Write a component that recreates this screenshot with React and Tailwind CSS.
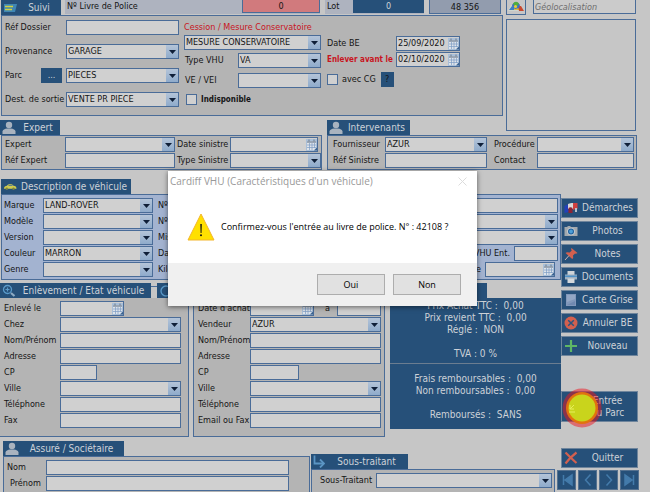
import React from "react";
import clsx from "clsx";

const BORDER = "border-[#4a6c98]";

/* ---------- icons ---------- */

function PersonIcon() {
  return (
    <svg viewBox="0 0 14 14" className="h-[14px] w-[14px] shrink-0" fill="#a9b3bf">
      <circle cx="7" cy="4" r="3.2" />
      <path d="M0.5 13V10.5C0.5 8.5 3 7.6 5 7.4h4c2 .2 4.500 1.100 4.500 3.100V13z" />
    </svg>
  );
}

function NoteIcon() {
  return (
    <svg viewBox="0 0 14 12" className="h-3 w-[14px] shrink-0">
      <path d="M1 2h13l-2 8H1z" fill="#3f86b4" />
      <path d="M2 4.500h8M2 7.500h7" stroke="#d3d23f" strokeWidth="1.300" />
    </svg>
  );
}

function CarIcon() {
  return (
    <svg viewBox="0 0 14 8" className="h-2 w-[14px] shrink-0">
      <path d="M1 5.500C1 3.500 2.500 3 4 2.800 5 1 9 .8 10.500 2.800c2 .3 3 1 3 2.900H1z" fill="#cfcb4e" />
      <path d="M5 3l1-1h3l1 1z" fill="#5f7f8c" />
      <circle cx="3.800" cy="5.800" r="1.200" fill="#7d8440" />
      <circle cx="10.500" cy="5.800" r="1.200" fill="#7d8440" />
    </svg>
  );
}

function SearchIcon() {
  return (
    <svg viewBox="0 0 14 14" className="h-[14px] w-[14px] shrink-0" fill="none" stroke="#5b9bcb">
      <circle cx="5.500" cy="5.500" r="4" strokeWidth="1.300" />
      <path d="M5.500 3.500v4M3.500 5.500h4" strokeWidth="1.200" />
      <path d="M9 9l3.500 3" strokeWidth="2.200" stroke="#8eabc4" />
    </svg>
  );
}

function CircleIcon() {
  return (
    <svg viewBox="0 0 14 14" className="h-[14px] w-[14px] shrink-0" fill="none" stroke="#5b9bcb">
      <circle cx="7" cy="7" r="5" strokeWidth="1.300" />
    </svg>
  );
}

function TurnIcon() {
  return (
    <svg viewBox="0 0 12 13" className="h-[13px] w-3 shrink-0" fill="none" stroke="#5b95c4" strokeWidth="1.800">
      <path d="M1.500 0.500V8.500H10" />
      <path d="M7 4.500l4 4-4 4" />
    </svg>
  );
}

function MapIcon() {
  return (
    <svg viewBox="0 0 16 12" className="h-3 w-4">
      <path d="M0 11l3-6 3 1 4-1 3 1 3 5z" fill="#cfd6cf" />
      <path d="M1 10l3-4 3 1-1 3z" fill="#3b7fc4" />
      <path d="M6 10l1-4 3-1 2 5z" fill="#dcb93a" />
      <path d="M10 6l3 0 3 5h-5z" fill="#c8482f" />
      <path d="M4 6c0-4 6-5 8-1l-1 3-4 1z" fill="#3b6fc4" />
      <path d="M5 4c1-3 5-3 6 0l-3 3z" fill="#4fae3f" />
      <circle cx="7.500" cy="6.500" r="1.600" fill="#e3cf3a" />
    </svg>
  );
}

function CalendarIcon() {
  return (
    <svg viewBox="0 0 11 12" className="h-3 w-[11px] shrink-0">
      <path d="M0 0h11v12H0z" fill="#a9bfd8" />
      <path d="M1 3h9v6l-2 2H1z" fill="#dfe4ea" />
      <path d="M1 2h9v2H1z" fill="#9aa6b5" />
      <path d="M3 0.500v2M8 0.500v2" stroke="#6d7a8a" />
      <path d="M3.500 4v7M6 4v7M8.500 4v5M1 6h9M1 8.500h9" stroke="#7d9cc4" strokeWidth="0.700" />
      <path d="M8 11.500l3-3v3z" fill="#3a628f" />
    </svg>
  );
}

function FlagIcon() {
  return (
    <svg viewBox="0 0 14 12" className="h-3 w-[14px]">
      <path d="M0.500 4l4-2v8l-4 1z" fill="#2440b8" />
      <path d="M4 2c2-1 3-1 5-1v6H4z" fill="#d8d8d8" />
      <path d="M9 1c2 0 3 0 4.500 0v6c-2 0-3 0-4.500 1z" fill="#d04040" />
      <path d="M4.500 6c1-1 3-1 4 0v5h-4z" fill="#8d2434" />
      <path d="M11 6h2v4h-2z" fill="#b9c0cc" />
    </svg>
  );
}

function CameraIcon() {
  return (
    <svg viewBox="0 0 14 12" className="h-3 w-[14px]">
      <path d="M0.500 2h3V1h3v1h7v9h-13z" fill="#a3a9ae" />
      <circle cx="7" cy="6.500" r="3.800" fill="#c9d0d6" />
      <circle cx="7" cy="6.500" r="3" fill="#1f5f9c" />
      <circle cx="7" cy="6.500" r="1.900" fill="#4c9ed8" />
    </svg>
  );
}

function PinIcon() {
  return (
    <svg viewBox="0 0 14 14" className="h-[14px] w-[14px]">
      <path d="M7.500 1l6 5-1.500.8-1-.3-2 2 .2 2.500-1 1L1.500 6l1.500-.8 2.700.3 2-2-.7-1.500z" fill="#d2604f" />
      <path d="M5 8.500L1 13" stroke="#c7b4b4" />
    </svg>
  );
}

function PrinterIcon() {
  return (
    <svg viewBox="0 0 14 14" className="h-[14px] w-[14px]">
      <path d="M3.500 1h7v4h-7z" fill="#cfd4d8" />
      <path d="M1 4.500h12v5H1z" fill="#9fb0c0" />
      <path d="M1 5.500h12v1.500H1z" fill="#4f93c9" />
      <path d="M3.500 8.500h7V13h-7z" fill="#d3d8dc" />
    </svg>
  );
}

function CardIcon() {
  return (
    <svg viewBox="0 0 14 14" className="h-[14px] w-[14px]">
      <path d="M2 1h10v12H2z" fill="#8198ba" />
      <path d="M3 2h8v4L3 9z" fill="#93a7c5" />
      <path d="M3 12h8V8z" fill="#7089b0" />
    </svg>
  );
}

function CancelIcon() {
  return (
    <svg viewBox="0 0 14 14" className="h-[14px] w-[14px]">
      <circle cx="7" cy="7" r="6.500" fill="#d2604f" />
      <path d="M4.200 4.200l5.600 5.600M9.800 4.200l-5.600 5.600" stroke="#2b5580" strokeWidth="1.500" />
    </svg>
  );
}

function PlusIcon() {
  return (
    <svg viewBox="0 0 14 14" className="h-[14px] w-[14px]">
      <path d="M7 1v12M1 7h12" stroke="#5fb765" strokeWidth="2.200" />
    </svg>
  );
}

function CrossIcon() {
  return (
    <svg viewBox="0 0 14 14" className="h-[14px] w-[14px]">
      <path d="M1.500 1.500c3 3 7 7 11 10.500M12.500 1.500c-4 3-8 7-11 11" stroke="#d2604f" strokeWidth="2.200" fill="none" />
    </svg>
  );
}

/* ---------- form parts ---------- */

function Tab({ icon, label, children, className }) {
  return (
    <h2
      aria-label={label}
      className={clsx(
        "flex h-[15px] items-center bg-[#265079] pl-[2px] text-[10px] leading-[14px] text-[#cdd2d8]",
        className
      )}
    >
      {icon}
      <span className="flex-1 whitespace-nowrap text-center">{children}</span>
    </h2>
  );
}

function Text({ id, label, className }) {
  return (
    <input
      id={id}
      aria-label={label}
      className={clsx("h-[15px] min-w-0 border bg-[#d0d0d0] px-px outline-none", BORDER, className)}
    />
  );
}

function Select({ id, label, value = "", className }) {
  return (
    <span className={clsx("flex h-[15px] min-w-0 border bg-[#d0d0d0]", BORDER, className)}>
      <select id={id} aria-label={label} className="min-w-0 flex-1 appearance-none bg-transparent pl-px outline-none">
        <option>{value}</option>
      </select>
      <span className="flex w-[12px] shrink-0 items-center justify-center bg-gradient-to-b from-[#b4c4d8] to-[#8fabcb]">
        <svg viewBox="0 0 7 4" className="h-1 w-[7px]">
          <path d="M0 0h7L3.500 4z" fill="#0f1f38" />
        </svg>
      </span>
    </span>
  );
}

function DateBox({ id, label, value = "", className }) {
  return (
    <span className={clsx("flex h-[15px] min-w-0 items-center border bg-[#d0d0d0]", BORDER, className)}>
      <input id={id} aria-label={label} defaultValue={value} className="min-w-0 flex-1 bg-transparent pl-px outline-none" />
      <CalendarIcon />
    </span>
  );
}

function Label({ id, children, className }) {
  return (
    <label htmlFor={id} className={clsx("shrink-0 whitespace-nowrap", className)}>
      {children}
    </label>
  );
}

function Row({ children, className }) {
  return <div className={clsx("flex h-[15px] items-center", className)}>{children}</div>;
}

const PANEL = "border border-[#4a6c98] bg-[#b4b4b4]";

/* ---------- sections ---------- */

function TopSection() {
  return (
    <div className="flex">
      <div className="min-w-0 flex-1">
        <div className="flex h-[15px] pr-[2px] pl-px">
          <Tab icon={<NoteIcon />} className="w-[60px] shrink-0">Suivi</Tab>
          <div className="ml-1 flex h-[14px] min-w-0 flex-1 bg-[#aeb3bf]">
            <Label id="livre" className="flex-1 pl-[2px]">Nº Livre de Police</Label>
            <input id="livre" defaultValue="0" className="h-[13px] w-[78px] border-x border-b border-[#4a6c98] bg-[#d17a7d] text-center outline-none" />
          </div>
          <div className="ml-[5px] flex h-[14px] bg-[#aeb3bf]">
            <Label id="lot" className="w-[28px] pl-[2px]">Lot</Label>
            <input id="lot" defaultValue="0" className="h-[13px] w-[71px] bg-[#265079] text-center text-[#cdd2d8] outline-none" />
          </div>
          <input aria-label="Total" defaultValue="48 356" className="ml-[5px] h-[14px] w-[72px] border-x border-b border-[#4a6c98] bg-[#929cae] text-center outline-none" />
        </div>

        <div className={clsx("ml-px flex h-[101px] pt-1 pl-[3px]", PANEL)}>
          <div className="flex w-[174px] flex-col gap-[9px]">
            <Row>
              <Label id="dossier" className="w-[61px]">Réf Dossier</Label>
              <Text id="dossier" className="flex-1" />
            </Row>
            <Row>
              <Label id="prov" className="w-[61px]">Provenance</Label>
              <Select id="prov" value="GARAGE" className="flex-1" />
            </Row>
            <Row>
              <Label id="parc" className="w-[36px]">Parc</Label>
              <button className="mr-1 h-[15px] w-[21px] bg-[#265079] text-[#cdd2d8]">...</button>
              <Select id="parc" value="PIECES" className="flex-1" />
            </Row>
            <Row>
              <Label id="dest" className="w-[61px]">Dest. de sortie</Label>
              <Select id="dest" value="VENTE PR PIECE" className="flex-1" />
            </Row>
          </div>

          <div className="ml-[5px] flex w-[137px] flex-col">
            <Label id="cession" className="h-[15px] pt-px text-[#c8141e]">Cession / Mesure Conservatoire</Label>
            <Select id="cession" value="MESURE CONSERVATOIRE" />
            <Row className="mt-[3px]">
              <Label id="vhu" className="w-[54px] pl-px">Type VHU</Label>
              <Select id="vhu" value="VA" className="flex-1" />
            </Row>
            <Row className="mt-[5px]">
              <Label id="vei" className="w-[54px] pl-px">VE / VEI</Label>
              <Select id="vei" className="flex-1" />
            </Row>
            <Row className="mt-[4px] gap-1 pl-[2px]">
              <input id="indispo" type="checkbox" className="h-[11px] w-[11px] appearance-none border border-[#4a6c98] bg-[#d0d0d0]" />
              <Label id="indispo" className="text-[8px] font-bold">Indisponible</Label>
            </Row>
          </div>

          <div className="ml-[6px] flex flex-col gap-px pt-4">
            <Row>
              <Label id="be" className="w-[69px]">Date BE</Label>
              <DateBox id="be" value="25/09/2020" className="w-[64px]" />
            </Row>
            <Row>
              <Label id="enlever" className="w-[69px] text-[8px] font-bold text-[#c8141e]">Enlever avant le</Label>
              <DateBox id="enlever" value="02/10/2020" className="w-[64px]" />
            </Row>
            <Row className="mt-1">
              <input id="cg" type="checkbox" className="mr-1 h-[11px] w-[11px] appearance-none border border-[#4a6c98] bg-[#d0d0d0]" />
              <Label id="cg">avec CG</Label>
              <button className="ml-[5px] h-[15px] w-[13px] bg-[#265079]">?</button>
            </Row>
          </div>
        </div>

        <div className="mt-1 flex">
          <div className="w-[327px]">
            <Tab icon={<PersonIcon />} className="w-[60px]">Expert</Tab>
          </div>
          <Tab icon={<PersonIcon />} className="w-[83px]">Intervenants</Tab>
        </div>
      </div>

      <div className="mr-[14px] ml-[3px] flex w-[130px] flex-col">
        <div className="flex h-[14px] justify-between">
          <button aria-label="Carte" className="flex h-[15px] w-5 justify-center border-x border-b border-[#4a6c98]">
            <MapIcon />
          </button>
          <input
            aria-label="Géolocalisation"
            placeholder="Géolocalisation"
            className="h-[14px] w-[103px] border-x border-b border-[#4a6c98] bg-[#cbcbcb] px-px italic outline-none placeholder:text-[#6e6e6e]"
          />
        </div>
        <div className="mt-[5px] mb-1 flex-1 border border-[#4a6c98]" />
      </div>
    </div>
  );
}

function PeopleRow() {
  return (
    <div className="flex gap-[5px] pr-[13px] pl-px">
      <div className={clsx("flex w-[321px] shrink-0 flex-col gap-px py-px pl-[3px]", PANEL)}>
        <Row>
          <Label id="expert" className="w-[60px]">Expert</Label>
          <Select id="expert" className="w-[110px]" />
          <Label id="dsin" className="ml-[2px] w-[53px]">Date sinistre</Label>
          <DateBox id="dsin" className="w-[88px]" />
        </Row>
        <Row>
          <Label id="refexp" className="w-[60px]">Réf Expert</Label>
          <Text id="refexp" className="w-[110px]" />
          <Label id="tsin" className="ml-[2px] w-[53px]">Type Sinistre</Label>
          <Select id="tsin" className="w-[91px]" />
        </Row>
      </div>
      <div className={clsx("flex min-w-0 flex-1 flex-col gap-px py-px pr-[2px] pl-[5px]", PANEL)}>
        <Row>
          <Label id="four" className="w-[52px]">Fournisseur</Label>
          <Select id="four" value="AZUR" className="w-[102px]" />
          <Label id="proc" className="ml-[7px] w-[43px]">Procédure</Label>
          <Select id="proc" className="flex-1" />
        </Row>
        <Row>
          <Label id="refsin" className="w-[52px]">Réf Sinistre</Label>
          <Text id="refsin" className="w-[102px]" />
          <Label id="contact" className="ml-[7px] w-[43px]">Contact</Label>
          <Text id="contact" className="flex-1" />
        </Row>
      </div>
    </div>
  );
}

const vehicleRows = [
  ["Marque", "LAND-ROVER", "Nº Immat."],
  ["Modèle", "", "Nº Série"],
  ["Version", "", "Mise en circ."],
  ["Couleur", "MARRON", "Date CG"],
  ["Genre", "", "Kilométrage"],
];

function VehicleSection() {
  return (
    <section className="pl-px">
      <Tab icon={<CarIcon />} className="w-[130px]">Description de véhicule</Tab>
      <div className="flex h-[86px] flex-col gap-px border border-[#4a6c98] bg-[#a3b3d0] pt-[3px] pr-[2px] pl-[2px]">
        {vehicleRows.map(([name, value, other], i) => (
          <Row key={name}>
            <Label id={"v" + i} className="w-[39px]">{name}</Label>
            <Select id={"v" + i} value={value} className="w-[110px]" />
            <Label id={"w" + i} className="ml-[5px] w-[60px]">{other}</Label>
            {i === 0 && <Text id="w0" className="flex-1" />}
            {(i === 1 || i === 2) && <Select id={"w" + i} className="flex-1" />}
            {i === 3 && (
              <>
                <Text id="w3" className="w-[80px]" />
                <Label id="ent" className="ml-auto pr-1">VHU Ent.</Label>
                <Text id="ent" className="w-[44px]" />
              </>
            )}
            {i === 4 && (
              <>
                <Text id="w4" className="w-[80px]" />
                <Label id="vente" className="ml-auto pr-1">Date vente</Label>
                <DateBox id="vente" className="mr-[3px] w-[70px]" />
              </>
            )}
          </Row>
        ))}
      </div>
    </section>
  );
}

function AddressRows({ prefix, labelWidth, last, shortWidth }) {
  const names = ["Nom/Prénom", "Adresse", "CP", "Ville", "Téléphone", last];
  return names.map((name) => (
    <Row key={name}>
      <Label id={prefix + name} className={labelWidth}>{name}</Label>
      {name === "Ville" ? (
        <Select id={prefix + name} className="flex-1" />
      ) : (
        <Text id={prefix + name} className={name === "CP" ? shortWidth : "flex-1"} />
      )}
    </Row>
  ));
}

function DetailSection() {
  return (
    <section className="mt-[3px]">
      <div className="flex">
        <Tab icon={<SearchIcon />} className="w-[151px]">Enlèvement / Etat véhicule</Tab>
        <span className="mt-[3px] w-[6px] border-t border-[#4a6c98]" />
        <Tab icon={<CircleIcon />} className="w-[150px]">Achat</Tab>
        <Tab label="Totaux" className="ml-[83px] w-[97px]" />
      </div>
      <div className="flex h-[139px]">
        <div className={clsx("flex w-[189px] flex-col gap-px border-t-0 border-l-0 pt-[3px] pr-[7px] pl-1", PANEL)}>
          <Row>
            <Label id="enl" className="w-[56px]">Enlevé le</Label>
            <DateBox id="enl" className="w-[64px]" />
          </Row>
          <Row>
            <Label id="chez" className="w-[56px]">Chez</Label>
            <Select id="chez" className="flex-1" />
          </Row>
          <AddressRows prefix="e" labelWidth="w-[56px]" last="Fax" shortWidth="w-[37px]" />
        </div>
        <div className={clsx("ml-1 flex w-[192px] flex-col gap-px pt-[2px] pr-[3px] pl-1", PANEL)}>
          <Row>
            <Label id="achat" className="w-[52px]">Date d'achat</Label>
            <DateBox id="achat" className="w-[64px]" />
            <Label id="heure" className="ml-[11px]">à</Label>
            <Text id="heure" className="ml-auto w-[44px]" />
          </Row>
          <Row>
            <Label id="vend" className="w-[52px]">Vendeur</Label>
            <Select id="vend" value="AZUR" className="flex-1" />
          </Row>
          <AddressRows prefix="a" labelWidth="w-[52px]" last="Email ou Fax" shortWidth="w-[49px]" />
        </div>
        <div className="ml-[5px] h-[131px] flex-1 whitespace-pre bg-[#265079] text-center text-[10px] leading-[12px] text-[#cdd2d8]">
          <div className="h-[66px] border-b border-[#6b7d90] pt-[2px]">
            <p>Prix Achat TTC :  0,00</p>
            <p>Prix revient TTC :  0,00</p>
            <p>Réglé :  NON</p>
            <p className="mt-3">TVA : 0 %</p>
          </div>
          <div className="pt-[9px]">
            <p>Frais remboursables :  0,00</p>
            <p>Non remboursables :  0,00</p>
            <p className="mt-3">Remboursés :  SANS</p>
          </div>
        </div>
      </div>
    </section>
  );
}

function SideButton({ icon, children }) {
  return (
    <button className="flex h-5 w-full items-center border border-[#6f859c] bg-[#265079] pl-[2px] text-[10px] leading-[12px] text-[#cdd2d8]">
      {icon}
      <span className="flex-1 text-center">{children}</span>
    </button>
  );
}

function SideButtons() {
  return (
    <div className="flex w-[77px] shrink-0 flex-col gap-[3px] pt-[19px]">
      <SideButton icon={<FlagIcon />}>Démarches</SideButton>
      <SideButton icon={<CameraIcon />}>Photos</SideButton>
      <SideButton icon={<PinIcon />}>Notes</SideButton>
      <SideButton icon={<PrinterIcon />}>Documents</SideButton>
      <SideButton icon={<CardIcon />}>Carte Grise</SideButton>
      <SideButton icon={<CancelIcon />}>Annuler BE</SideButton>
      <SideButton icon={<PlusIcon />}>Nouveau</SideButton>
      <button className="relative mt-8 h-[31px] border border-[#6f859c] bg-[#265079] pl-4 text-[10px] leading-[12px] text-[#cdd2d8]">
        Entrée
        <br />
        du Parc
        <svg viewBox="0 0 40 40" className="absolute top-[-4px] left-0 h-10 w-10">
          <circle cx="20" cy="20" r="19.500" fill="#f0141e" fillOpacity="0.5" />
          <circle cx="20" cy="20" r="16" fill="#e2720f" />
          <circle cx="20" cy="20" r="13.500" fill="#c9d41c" />
          <path d="M12 17l-4 4M8 17v4h4M7 24h6" stroke="#e6ee5a" fill="none" />
        </svg>
      </button>
    </div>
  );
}

const navPaths = [
  ["Premier", "M3.500 2v10M12 2v10L5 7z", true],
  ["Précédent", "M9.500 1.500L4.500 7l5 5.500", false],
  ["Suivant", "M4.500 1.500L9.500 7l-5 5.500", false],
  ["Dernier", "M10.500 2v10M2 2v10l7-5z", true],
];

function BottomSection() {
  return (
    <div className="flex flex-1 pr-[11px] pl-[3px]">
      <section className="flex w-[307px] flex-col pt-1">
        <Tab icon={<PersonIcon />} className="w-[121px]">Assuré / Sociétaire</Tab>
        <div className={clsx("flex flex-1 flex-col gap-px border-b-0 pt-[3px] pr-5 pl-[3px]", PANEL)}>
          <Row>
            <Label id="nom" className="w-[39px]">Nom</Label>
            <Text id="nom" className="flex-1" />
          </Row>
          <Row>
            <Label id="prenom" className="w-[39px] pl-[3px]">Prénom</Label>
            <Text id="prenom" className="flex-1" />
          </Row>
        </div>
      </section>
      <section className="ml-px flex flex-1 flex-col pt-[17px]">
        <Tab icon={<TurnIcon />} className="w-[97px]">Sous-traitant</Tab>
        <div className={clsx("flex-1 border-b-0 pt-[3px] pr-[2px] pl-[8px]", PANEL)}>
          <Row>
            <Label id="sous" className="w-[56px]">Sous-Traitant</Label>
            <Select id="sous" className="flex-1" />
          </Row>
        </div>
      </section>
      <div className="ml-[2px] w-[82px] pt-[11px]">
        <div className="pr-px pl-1">
          <SideButton icon={<CrossIcon />}>Quitter</SideButton>
        </div>
        <div className="mt-[2px] flex gap-[2px]">
          {navPaths.map(([name, d, filled]) => (
            <button key={name} aria-label={name} className="flex h-5 flex-1 items-center justify-center border border-[#55718f] bg-[#265079]">
              <svg viewBox="0 0 14 14" className="h-[14px] w-[14px]" stroke="#447bab" strokeWidth="1.500" fill={filled ? "#447bab" : "none"}>
                <path d={d} />
              </svg>
            </button>
          ))}
        </div>
      </div>
    </div>
  );
}

function ConfirmDialog() {
  return (
    <div
      role="dialog"
      aria-labelledby="dlg-title"
      className="absolute top-[171px] left-[168px] w-[309px] bg-white font-['Open_Sans',sans-serif] text-black shadow-[0_1px_5px_rgba(0,0,0,0.55)]"
    >
      <div className="flex h-[21px] items-center justify-between pr-[10px] pl-[2px]">
        <h1 id="dlg-title" className="text-[10px] text-[#999999]">Cardiff VHU (Caractéristiques d'un véhicule)</h1>
        <button aria-label="Fermer">
          <svg viewBox="0 0 9 9" className="h-[9px] w-[9px]" stroke="#dcdcdc" fill="none">
            <path d="M0.500 0.500l8 8M8.500 0.500l-8 8" />
          </svg>
        </button>
      </div>
      <div className="flex h-[71px] items-center pb-[2px] pl-[19px]">
        <svg viewBox="0 0 28 28" className="h-7 w-7 shrink-0">
          <path d="M14 1L27 27H1z" fill="#ffe000" stroke="#f3b62c" />
          <path d="M13.300 11h1.500l-.3 9h-.9z" fill="#111" />
          <circle cx="14" cy="22.300" r="1" fill="#111" />
        </svg>
        <p className="ml-[6px] whitespace-nowrap text-[9px]">Confirmez-vous l'entrée au livre de police. N° : 42108 ?</p>
      </div>
      <div className="flex h-[43px] items-center justify-end gap-2 bg-[#f0f0f0] pr-4">
        <button className="h-[21px] w-[68px] border border-[#adadad] bg-[#e1e1e1] text-[9px]">Oui</button>
        <button className="h-[21px] w-[68px] border border-[#adadad] bg-[#e1e1e1] text-[9px]">Non</button>
      </div>
    </div>
  );
}

export default function App() {
  return (
    <main className="relative flex min-h-screen flex-col bg-[#c6c6c6] font-['DejaVu_Sans_Condensed','Noto_Sans',sans-serif] text-[9px] leading-[13px] text-[#141414]">
      <TopSection />
      <PeopleRow />
      <div className="mt-[9px] flex pr-3">
        <div className="min-w-0 flex-1">
          <VehicleSection />
          <DetailSection />
        </div>
        <SideButtons />
      </div>
      <BottomSection />
      <ConfirmDialog />
    </main>
  );
}
